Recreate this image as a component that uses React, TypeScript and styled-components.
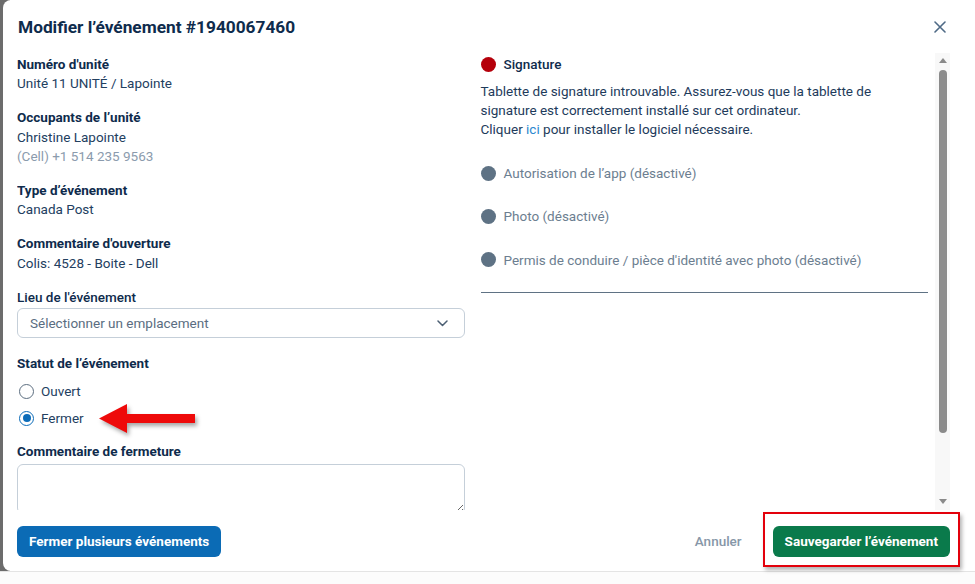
import React from "react";
import styled, { createGlobalStyle } from "styled-components";

const Global = createGlobalStyle`
  html, body { margin: 0; padding: 0; background: #fcfcfc; }
  body { font-family: Roboto, "Liberation Sans", Arial, sans-serif; }
  * { box-sizing: border-box; }
`;

const Screen = styled.div`
  width: 975px;
  height: 584px;
  display: flex;
  flex-direction: column;
  overflow: hidden;
`;

const Backdrop = styled.div`
  height: 572px;
  display: flex;
  background: linear-gradient(to right, #6c6c6c 0 10px, #ffffff 10px);
  border-bottom: 1px solid #e4e4e4;
`;

const Modal = styled.div`
  width: 962px;
  margin-left: 3px;
  height: 571px;
  background: #ffffff;
  border-radius: 8px 0 0 8px;
  display: flex;
  flex-direction: column;
`;

const Header = styled.div`
  height: 53px;
  flex: none;
  display: flex;
  align-items: center;
  justify-content: space-between;
  padding: 0 13px 0 15px;
`;

const Title = styled.h1`
  margin: 0;
  font-size: 17.3px;
  font-weight: 700;
  color: #0e2b4c;
`;

const CloseButton = styled.button`
  width: 24px;
  height: 24px;
  border: none;
  background: transparent;
  padding: 0;
  display: flex;
  align-items: center;
  justify-content: center;
  cursor: pointer;
`;

const Body = styled.div`
  flex: 1;
  min-height: 0;
  display: flex;
  gap: 7px;
  padding: 0 15px 0 14px;
  overflow: hidden;
`;

const Content = styled.div`
  flex: 1;
  display: grid;
  grid-template-columns: 1fr 1fr;
  column-gap: 16px;
  overflow: hidden;
  align-items: start;
`;

const Column = styled.div`
  display: flex;
  flex-direction: column;
  min-width: 0;
`;

const Field = styled.div<{ $mt?: number }>`
  display: flex;
  flex-direction: column;
  margin-top: ${(p) => p.$mt ?? 15}px;
  &:first-child { margin-top: 2px; }
`;

const Label = styled.div<{ $medium?: boolean }>`
  font-size: 13.5px;
  line-height: 19.2px;
  font-weight: ${(p) => (p.$medium ? 500 : 700)};
  color: #0e2b4c;
`;

const Value = styled.div<{ $muted?: boolean }>`
  font-size: 13.5px;
  line-height: 19.2px;
  color: ${(p) => (p.$muted ? "#8b9bad" : "#23405f")};
`;

const Select = styled.div`
  height: 30px;
  margin-top: 1px;
  border: 1px solid #c5cfd9;
  border-radius: 6px;
  display: flex;
  align-items: center;
  justify-content: space-between;
  padding: 0 16px 0 12px;
  font-size: 13.5px;
  color: #5a6d81;
`;

const RadioList = styled.div`
  display: flex;
  flex-direction: column;
  margin-top: 4px;
`;

const RadioRow = styled.label`
  position: relative;
  height: 27px;
  display: flex;
  align-items: center;
  gap: 7px;
  padding-left: 2px;
  font-size: 13.5px;
  color: #23405f;
`;

const RadioCircle = styled.span<{ $checked?: boolean }>`
  width: 15px;
  height: 15px;
  border-radius: 50%;
  border: 1.5px solid ${(p) => (p.$checked ? "#0c6cb9" : "#5c6e80")};
  display: flex;
  align-items: center;
  justify-content: center;
  &::after {
    content: "";
    width: 8px;
    height: 8px;
    border-radius: 50%;
    background: ${(p) => (p.$checked ? "#0c6cb9" : "transparent")};
  }
`;

const ArrowMark = styled.svg`
  position: absolute;
  left: 82px;
  top: -2px;
  overflow: visible;
  filter: drop-shadow(2px 3px 2px rgba(0, 0, 0, 0.35));
`;

const TextArea = styled.textarea`
  margin-top: 2.4px;
  height: 50px;
  flex: none;
  border: 1px solid #c5cfd9;
  border-radius: 6px;
  resize: vertical;
  font-family: inherit;
  font-size: 13.5px;
  outline: none;
`;

const SignatureRow = styled.div`
  margin-top: 1px;
  height: 20px;
  display: flex;
  align-items: center;
  gap: 8px;
  font-size: 13.5px;
  font-weight: 500;
  color: #0e2b4c;
`;

const Dot = styled.span<{ $color: string }>`
  width: 15px;
  height: 15px;
  border-radius: 50%;
  background: ${(p) => p.$color};
  flex: none;
`;

const Paragraph = styled.p`
  margin: 8px 0 0;
  font-size: 13.5px;
  line-height: 19px;
  color: #1e3b5b;
`;

const Link = styled.a`
  color: #2a88cf;
  text-decoration: none;
`;

const StepList = styled.div`
  display: flex;
  flex-direction: column;
  gap: 23.3px;
  margin-top: 24px;
`;

const StepRow = styled.div`
  height: 20px;
  display: flex;
  align-items: center;
  gap: 8px;
  font-size: 13.5px;
  color: #6c7e90;
`;

const Divider = styled.hr`
  margin: 22.5px 0 0;
  border: none;
  border-top: 1px solid #5f7284;
`;

const Scrollbar = styled.div`
  width: 15px;
  flex: none;
  background: #f8f8f8;
  display: flex;
  flex-direction: column;
  align-items: center;
  padding: 5px 0 6px;
`;

const ScrollArrow = styled.span<{ $down?: boolean }>`
  width: 0;
  height: 0;
  border-left: 4px solid transparent;
  border-right: 4px solid transparent;
  ${(p) =>
    p.$down
      ? "border-top: 5px solid #8a8a8a;"
      : "border-bottom: 5px solid #8a8a8a;"}
  flex: none;
`;

const ScrollTrack = styled.div`
  flex: 1;
  width: 100%;
  display: flex;
  justify-content: center;
  padding: 7px 0;
`;

const ScrollThumb = styled.div`
  width: 8px;
  height: 363px;
  border-radius: 4px;
  background: #8b8b8b;
`;

const Footer = styled.div`
  height: 61px;
  flex: none;
  display: flex;
  align-items: center;
  justify-content: space-between;
  padding: 1px 15px 0 14px;
`;

const Button = styled.button<{ $tone: "blue" | "green" }>`
  height: 31px;
  padding: 0 12px;
  border: none;
  border-radius: 6px;
  background: ${(p) => (p.$tone === "blue" ? "#0b6bb5" : "#0a7a4b")};
  color: #ffffff;
  font-family: inherit;
  font-size: 13.5px;
  font-weight: 700;
  cursor: pointer;
`;

const GhostButton = styled.button`
  height: 31px;
  padding: 0 16px;
  margin-right: 15px;
  border: none;
  background: transparent;
  color: #8797a8;
  font-family: inherit;
  font-size: 13.5px;
  font-weight: 500;
  cursor: pointer;
`;

const Actions = styled.div`
  display: flex;
  align-items: center;
`;

const Highlight = styled.div`
  position: relative;
  display: flex;
  &::before {
    content: "";
    position: absolute;
    top: -14px;
    left: -10px;
    right: -10px;
    bottom: -10px;
    border: 2px solid #e3000b;
    box-shadow: 2px 3px 4px rgba(0, 0, 0, 0.3);
    pointer-events: none;
  }
`;

export default function App() {
  return (
    <Screen>
      <Global />
      <Backdrop>
        <Modal>
          <Header>
            <Title>Modifier l’événement #1940067460</Title>
            <CloseButton aria-label="Fermer">
              <svg width="12" height="12" viewBox="0 0 12 12">
                <path d="M1 1L11 11M11 1L1 11" stroke="#4f6a86" strokeWidth="1.6" strokeLinecap="round" />
              </svg>
            </CloseButton>
          </Header>
          <Body>
            <Content>
              <Column>
                <Field>
                  <Label>Numéro d'unité</Label>
                  <Value>Unité 11 UNITÉ / Lapointe</Value>
                </Field>
                <Field>
                  <Label>Occupants de l’unité</Label>
                  <Value>Christine Lapointe</Value>
                  <Value $muted>(Cell) +1 514 235 9563</Value>
                </Field>
                <Field>
                  <Label>Type d’événement</Label>
                  <Value>Canada Post</Value>
                </Field>
                <Field>
                  <Label>Commentaire d'ouverture</Label>
                  <Value>Colis: 4528 - Boite - Dell</Value>
                </Field>
                <Field>
                  <Label $medium>Lieu de l'événement</Label>
                  <Select>
                    <span>Sélectionner un emplacement</span>
                    <svg width="11" height="7" viewBox="0 0 11 7">
                      <path d="M1 1L5.5 5.5L10 1" fill="none" stroke="#4c5f73" strokeWidth="1.5" strokeLinecap="round" strokeLinejoin="round" />
                    </svg>
                  </Select>
                </Field>
                <Field $mt={16.4}>
                  <Label>Statut de l’événement</Label>
                  <RadioList>
                    <RadioRow>
                      <RadioCircle />
                      Ouvert
                    </RadioRow>
                    <RadioRow>
                      <RadioCircle $checked />
                      Fermer
                      <ArrowMark width="96" height="31" viewBox="0 0 96 31">
                        <path d="M0 15.5L28 1V11H96V20H28V30Z" fill="#ee0a0a" />
                      </ArrowMark>
                    </RadioRow>
                  </RadioList>
                </Field>
                <Field $mt={10.8}>
                  <Label>Commentaire de fermeture</Label>
                  <TextArea />
                </Field>
              </Column>
              <Column>
                <SignatureRow>
                  <Dot $color="#b5000b" />
                  Signature
                </SignatureRow>
                <Paragraph>
                  Tablette de signature introuvable. Assurez-vous que la tablette de
                  <br />
                  signature est correctement installé sur cet ordinateur.
                  <br />
                  Cliquer <Link href="#">ici</Link> pour installer le logiciel nécessaire.
                </Paragraph>
                <StepList>
                  <StepRow>
                    <Dot $color="#5e7284" />
                    Autorisation de l’app (désactivé)
                  </StepRow>
                  <StepRow>
                    <Dot $color="#5e7284" />
                    Photo (désactivé)
                  </StepRow>
                  <StepRow>
                    <Dot $color="#5e7284" />
                    Permis de conduire / pièce d'identité avec photo (désactivé)
                  </StepRow>
                </StepList>
                <Divider />
              </Column>
            </Content>
            <Scrollbar>
              <ScrollArrow />
              <ScrollTrack>
                <ScrollThumb />
              </ScrollTrack>
              <ScrollArrow $down />
            </Scrollbar>
          </Body>
          <Footer>
            <Button $tone="blue">Fermer plusieurs événements</Button>
            <Actions>
              <GhostButton>Annuler</GhostButton>
              <Highlight>
                <Button $tone="green">Sauvegarder l’événement</Button>
              </Highlight>
            </Actions>
          </Footer>
        </Modal>
      </Backdrop>
    </Screen>
  );
}
